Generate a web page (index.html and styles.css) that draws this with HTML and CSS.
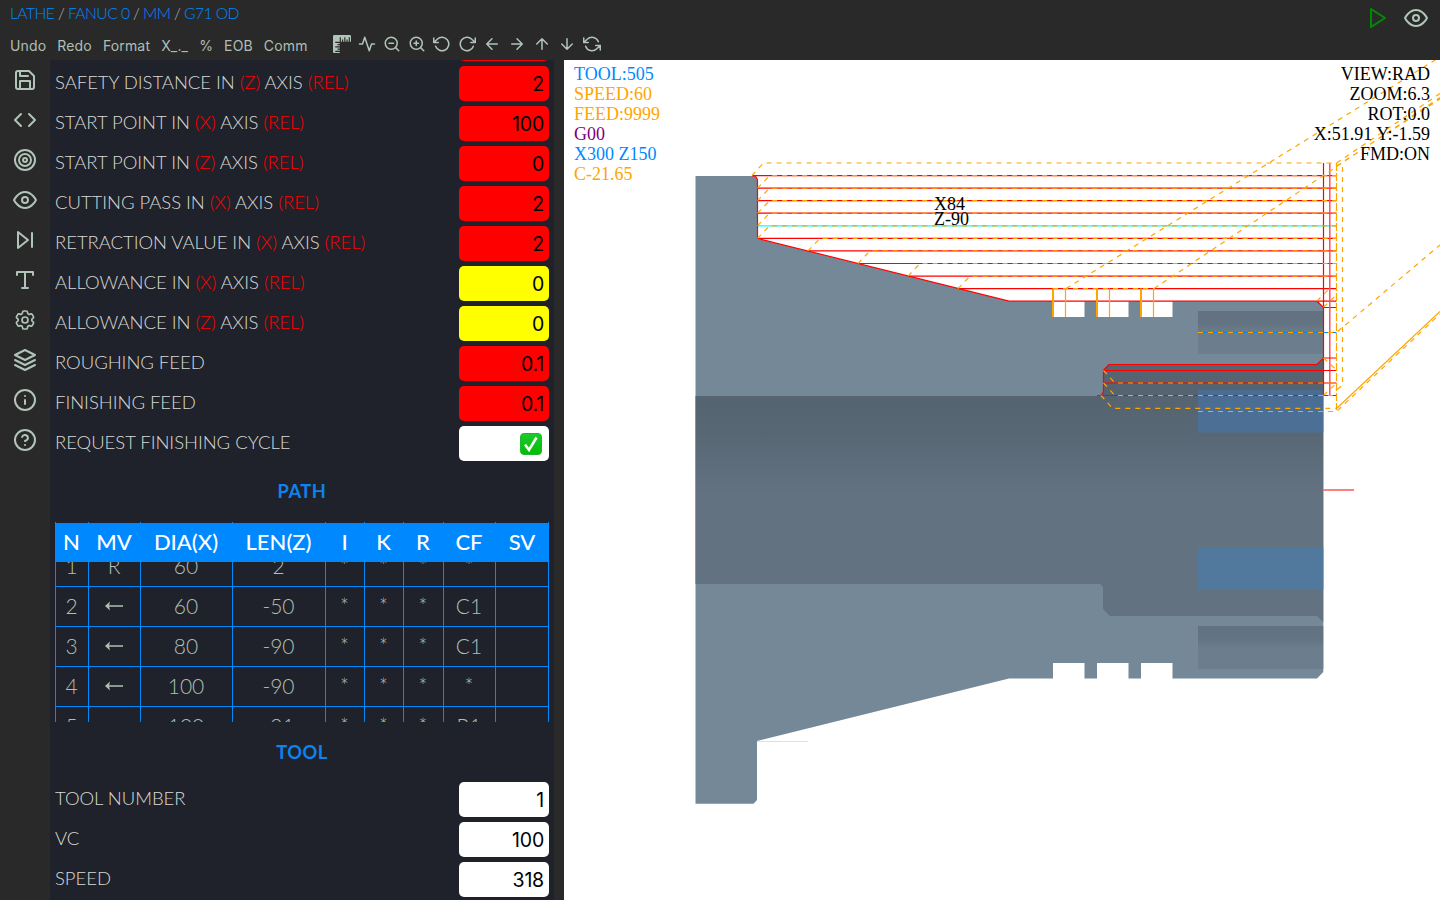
FILE: index.html
```html
<!DOCTYPE html>
<html lang="en">
<head>
<meta charset="utf-8">
<title>Lathe G71 OD</title>
<link rel="stylesheet" href="styles.css">
</head>
<body>
<div class="app">
  <header class="header">
    <div class="header-left">
      <nav class="crumbs"><a>LATHE</a> / <a>FANUC 0</a> / <a>MM</a> / <a>G71 OD</a></nav>
      <div class="toolbar">
        <div class="commands"><span>Undo</span><span>Redo</span><span>Format</span><span>X_._</span><span>%</span><span>EOB</span><span>Comm</span></div>
        <div class="tools">
          <svg class="tool" viewBox="0 0 16 16"><path class="solid" d="M1 0a1 1 0 0 0-1 1v14a1 1 0 0 0 1 1h5v-1H2v-1h4v-1H4v-1h2v-1H2v-1h4V9H4V8h2V7H2V6h4V2h1v4h1V4h1v2h1V2h1v4h1V4h1v2h1V2h1v4h1V1a1 1 0 0 0-1-1z"/></svg>
          <svg class="tool" viewBox="0 0 24 24"><polyline points="22 12 18 12 15 21 9 3 6 12 2 12"/></svg>
          <svg class="tool" viewBox="0 0 24 24"><circle cx="11" cy="11" r="8"/><path d="M21 21l-4.350-4.350M8 11h6"/></svg>
          <svg class="tool" viewBox="0 0 24 24"><circle cx="11" cy="11" r="8"/><path d="M21 21l-4.350-4.350M11 8v6M8 11h6"/></svg>
          <svg class="tool" viewBox="0 0 24 24"><path d="M1 4v6h6M3.510 15a9 9 0 1 0 2.130-9.360L1 10"/></svg>
          <svg class="tool" viewBox="0 0 24 24"><path d="M23 4v6h-6M20.490 15a9 9 0 1 1-2.120-9.360L23 10"/></svg>
          <svg class="tool" viewBox="0 0 24 24"><path d="M19 12H5M12 19l-7-7 7-7"/></svg>
          <svg class="tool" viewBox="0 0 24 24"><path d="M5 12h14M12 5l7 7-7 7"/></svg>
          <svg class="tool" viewBox="0 0 24 24"><path d="M12 19V5M5 12l7-7 7 7"/></svg>
          <svg class="tool" viewBox="0 0 24 24"><path d="M12 5v14M19 12l-7 7-7-7"/></svg>
          <svg class="tool" viewBox="0 0 24 24"><path d="M1 4v6h6M23 20v-6h-6M20.490 9A9 9 0 0 0 5.640 5.640L1 10m22 4l-4.640 4.360A9 9 0 0 1 3.510 15"/></svg>
        </div>
      </div>
    </div>
    <div class="header-right">
      <svg class="icon play" viewBox="0 0 24 24"><path d="M5 3l14 9-14 9z"/></svg>
      <svg class="icon view" viewBox="0 0 24 24"><path d="M1 12s4-8 11-8 11 8 11 8-4 8-11 8S1 12 1 12z"/><circle cx="12" cy="12" r="3"/></svg>
    </div>
  </header>
  <main class="main">
    <aside class="rail">
      <svg class="icon" viewBox="0 0 24 24"><path d="M19 21H5a2 2 0 0 1-2-2V5a2 2 0 0 1 2-2h11l5 5v11a2 2 0 0 1-2 2z"/><path d="M17 21v-8H7v8M7 3v5h8"/></svg>
      <svg class="icon" viewBox="0 0 24 24"><path d="M16 18l6-6-6-6M8 6l-6 6 6 6"/></svg>
      <svg class="icon" viewBox="0 0 24 24"><circle cx="12" cy="12" r="10"/><circle cx="12" cy="12" r="6"/><circle cx="12" cy="12" r="2"/></svg>
      <svg class="icon" viewBox="0 0 24 24"><path d="M1 12s4-8 11-8 11 8 11 8-4 8-11 8S1 12 1 12z"/><circle cx="12" cy="12" r="3"/></svg>
      <svg class="icon" viewBox="0 0 24 24"><path d="M5 4l10 8-10 8zM19 5v14"/></svg>
      <svg class="icon" viewBox="0 0 24 24"><path d="M4 7V4h16v3M9 20h6M12 4v16"/></svg>
      <svg class="icon gear" viewBox="0 0 24 24"><path d="M9.594 3.940c.09-.542.56-.94 1.110-.94h2.593c.55 0 1.020.398 1.110.94l.213 1.281c.063.374.313.686.645.87.074.04.147.083.22.127.325.196.72.257 1.075.124l1.217-.456a1.125 1.125 0 0 1 1.370.49l1.296 2.247a1.125 1.125 0 0 1-.26 1.431l-1.003.827c-.293.241-.438.613-.43.992a7.723 7.723 0 0 1 0 .255c-.008.378.137.75.43.991l1.004.827c.424.35.534.955.26 1.430l-1.298 2.247a1.125 1.125 0 0 1-1.369.491l-1.217-.456c-.355-.133-.75-.072-1.076.124a6.470 6.470 0 0 1-.22.128c-.331.183-.581.495-.644.869l-.213 1.281c-.09.543-.56.94-1.110.94h-2.594c-.55 0-1.019-.398-1.110-.94l-.213-1.281c-.062-.374-.312-.686-.644-.87a6.520 6.520 0 0 1-.22-.127c-.325-.196-.72-.257-1.076-.124l-1.217.456a1.125 1.125 0 0 1-1.369-.49l-1.297-2.247a1.125 1.125 0 0 1 .26-1.431l1.004-.827c.292-.24.437-.613.43-.991a6.932 6.932 0 0 1 0-.255c.007-.38-.138-.751-.43-.992l-1.004-.827a1.125 1.125 0 0 1-.26-1.430l1.297-2.247a1.125 1.125 0 0 1 1.370-.491l1.216.456c.356.133.751.072 1.076-.124.072-.044.146-.086.22-.128.332-.183.582-.495.644-.869l.214-1.280z"/><circle cx="12" cy="12" r="3"/></svg>
      <svg class="icon" viewBox="0 0 24 24"><path d="M12 2L2 7l10 5 10-5zM2 17l10 5 10-5M2 12l10 5 10-5"/></svg>
      <svg class="icon" viewBox="0 0 24 24"><circle cx="12" cy="12" r="10"/><path d="M12 16v-4M12 8h.01"/></svg>
      <svg class="icon" viewBox="0 0 24 24"><circle cx="12" cy="12" r="10"/><path d="M9.090 9a3 3 0 0 1 5.830 1c0 2-3 3-3 3M12 17h.01"/></svg>
    </aside>
    <section class="panel">
      <div class="fields scrolled">
        <div class="field"><label></label><output class="red"></output></div>
        <div class="field"><label>SAFETY DISTANCE IN <i>(Z)</i> AXIS <i>(REL)</i></label><output class="red">2</output></div>
        <div class="field"><label>START POINT IN <i>(X)</i> AXIS <i>(REL)</i></label><output class="red">100</output></div>
        <div class="field"><label>START POINT IN <i>(Z)</i> AXIS <i>(REL)</i></label><output class="red">0</output></div>
        <div class="field"><label>CUTTING PASS IN <i>(X)</i> AXIS <i>(REL)</i></label><output class="red">2</output></div>
        <div class="field"><label>RETRACTION VALUE IN <i>(X)</i> AXIS <i>(REL)</i></label><output class="red">2</output></div>
        <div class="field"><label>ALLOWANCE IN <i>(X)</i> AXIS <i>(REL)</i></label><output class="yellow">0</output></div>
        <div class="field"><label>ALLOWANCE IN <i>(Z)</i> AXIS <i>(REL)</i></label><output class="yellow">0</output></div>
        <div class="field"><label>ROUGHING FEED</label><output class="red">0.1</output></div>
        <div class="field"><label>FINISHING FEED</label><output class="red">0.1</output></div>
        <div class="field"><label>REQUEST FINISHING CYCLE</label><output><svg class="check" viewBox="0 0 22 22"><defs><linearGradient id="tick" x2="0" y2="1"><stop stop-color="#1ccb2d"/><stop offset="1" stop-color="#00bd00"/></linearGradient></defs><rect x=".5" y=".5" width="21" height="21" rx="3.500" fill="url(#tick)" stroke="#21b52f"/><path d="M5 11.500l4 5.500 7.500-12.500" fill="none" stroke="#fff" stroke-width="2.600"/></svg></output></div>
      </div>
      <h2 class="title">PATH</h2>
      <div class="table">
        <div class="row head"><b>N</b><b>MV</b><b>DIA(X)</b><b>LEN(Z)</b><b>I</b><b>K</b><b>R</b><b>CF</b><b>SV</b></div>
        <div class="body"><div class="rows">
          <div class="row"><span>1</span><span>R</span><span>60</span><span>2</span><span>*</span><span>*</span><span>*</span><span>*</span><span></span></div>
          <div class="row"><span>2</span><span><svg class="arrow" viewBox="0 0 18 10"><path d="M0 5l5-4.500L4 5l1 4.500z M4 4.200h14v1.600H4z"/></svg></span><span>60</span><span>-50</span><span>*</span><span>*</span><span>*</span><span>C1</span><span></span></div>
          <div class="row"><span>3</span><span><svg class="arrow" viewBox="0 0 18 10"><path d="M0 5l5-4.500L4 5l1 4.500z M4 4.200h14v1.600H4z"/></svg></span><span>80</span><span>-90</span><span>*</span><span>*</span><span>*</span><span>C1</span><span></span></div>
          <div class="row"><span>4</span><span><svg class="arrow" viewBox="0 0 18 10"><path d="M0 5l5-4.500L4 5l1 4.500z M4 4.200h14v1.600H4z"/></svg></span><span>100</span><span>-90</span><span>*</span><span>*</span><span>*</span><span>*</span><span></span></div>
          <div class="row"><span>5</span><span><svg class="arrow" viewBox="0 0 18 10"><path d="M0 5l5-4.500L4 5l1 4.500z M4 4.200h14v1.600H4z"/></svg></span><span>100</span><span>-91</span><span>*</span><span>*</span><span>*</span><span>R1</span><span></span></div>
        </div></div>
      </div>
      <h2 class="title tool-title">TOOL</h2>
      <div class="fields">
        <div class="field"><label>TOOL NUMBER</label><output>1</output></div>
        <div class="field"><label>VC</label><output>100</output></div>
        <div class="field"><label>SPEED</label><output>318</output></div>
      </div>
    </section>
    <svg class="stage" viewBox="564 60 876 840" width="876" height="840">
      <defs>
        <linearGradient id="bore" gradientUnits="userSpaceOnUse" x1="0" y1="396" x2="0" y2="584"><stop stop-color="#566471"/><stop offset=".2" stop-color="#586774"/><stop offset=".52" stop-color="#627281"/><stop offset="1" stop-color="#627281"/></linearGradient>
        <linearGradient id="slot" x2="0" y2="1"><stop stop-color="#627281"/><stop offset=".3" stop-color="#637382"/><stop offset=".52" stop-color="#6c7e8e"/><stop offset="1" stop-color="#6c7e8e"/></linearGradient>
        <linearGradient id="blue" x2="0" y2="1"><stop stop-color="#496d92"/><stop offset="1" stop-color="#4c7097"/></linearGradient>
      </defs>
      <g class="part">
        <path fill="#758898" d="M695.500 176H752q5 0 5 5V238.500L1009 301.200H1053V317H1084.500V301.200H1097V317H1128.500V301.200H1141V317H1172.500V301.200H1317L1323.300 307.500V672L1317 678.500H1172.500V663H1141V678.500H1128.500V663H1097V678.500H1084.500V663H1053V678.500H1009L757 741V800L753.500 803.700H695.500z"/>
        <path fill="url(#bore)" d="M695.500 396H1101L1103.500 390V370L1109 364.500H1317L1323.300 358V622L1317 616H1110L1103 609V587L1100.500 584H695.500z"/>
        <rect x="1198" y="311" width="125.300" height="43" fill="url(#slot)"/>
        <rect x="1198" y="626" width="125.300" height="43" fill="url(#slot)"/>
        <rect x="1198" y="390" width="125.300" height="42.500" fill="url(#blue)"/>
        <rect x="1198" y="547.500" width="125.300" height="42" fill="#51789d"/>
        <path class="faint" d="M757 741.500H808"/>
      </g>
      <g class="cut">
        <path d="M752 175.700H1336.500M757.500 188.200H1336.500M757.500 200.700H1336.500M757.500 213.200H1336.500M757.500 238.400H1336.500M808 250.900H1336.500M858 263.500H1336.500M908 276.100H1336.500M958 288.600H1336.500"/>
        <path class="cyan" d="M757.500 225.800H1336.500"/>
        <path d="M752 175.700q5.500 0 5.500 6V238.400L1009 301.200H1317L1323.500 307.500H1336.500M1317 301.200h19.500"/>
        <path d="M1323.500 163V395.500M1323.500 490H1354"/>
        <path class="soft" d="M1329.800 163V395.500"/>
        <path d="M1336.500 358H1323.500L1317 364.500H1109L1103.500 370.300V392L1101 395.500M1103.500 370.500H1336.500M1103.500 383H1336.500M1097 395.500H1336.500"/>
        <path class="rapid-base" d="M1198 332.500H1336.500"/>
      </g>
      <g class="rapid">
        <path d="M752 175.500L763.500 163H1336.500"/>
        <path d="M757.500 188.200L769.500 175.700H1336.500M757.500 200.700L769.500 188.200H1336.500M757.500 213.200L769.500 200.700H1336.500M757.500 225.800L769.500 213.200H1336.500M757.500 238.400L769.500 225.800H1336.500"/>
        <path d="M808 250.900L820 238.400H1336.500M858 263.500L870 250.900H1336.500M908 276.100L920 263.500H1336.500M958 288.600L970 276.100H1336.500M1053 288.600H1155"/>
        <path d="M1066 288.600L1440 57M1154 288.600L1440 97.500M1336.500 163L1440 93.500M1336.500 166L1440 99"/>
        <path d="M1336.500 163V410M1336.500 166V410M1342.500 167V385L1336.500 390"/>
        <path d="M1317 301L1329 289M1323.500 307L1336.500 295M1323.500 358L1336.500 370M1323.500 395.500L1336.500 383"/>
        <path d="M1198 332.500H1336.500L1440 245"/>
        <path d="M1103.500 370.500L1115 383H1336.500M1103.500 383L1115 395.500H1336.500M1101 395.500L1112.500 408.300H1336.500M1198 411.500H1336.500L1440 314"/>
        <path class="continuous" d="M1336.500 408.500L1440 311.500"/>
        <path class="continuous wide" d="M1053 288.500V317M1097 288.500V317M1141 288.500V317"/>
        <path class="continuous" d="M1065.500 288.500V317M1109.500 288.500V317M1153.500 288.500V317"/>
      </g>
      <g class="readout">
        <text x="574" y="80" fill="#08f">TOOL:505</text>
        <text x="574" y="100" fill="orange">SPEED:60</text>
        <text x="574" y="120" fill="orange">FEED:9999</text>
        <text x="574" y="140" fill="purple">G00</text>
        <text x="574" y="160" fill="#08f">X300 Z150</text>
        <text x="574" y="180" fill="orange">C-21.65</text>
        <text x="934" y="210">X84</text>
        <text x="934" y="225">Z-90</text>
        <g text-anchor="end">
          <text x="1430" y="80">VIEW:RAD</text>
          <text x="1430" y="100">ZOOM:6.3</text>
          <text x="1430" y="120">ROT:0.0</text>
          <text x="1430" y="140">X:51.91 Y:-1.59</text>
          <text x="1430" y="160">FMD:ON</text>
        </g>
      </g>
    </svg>
  </main>
</div>
</body>
</html>
```
FILE: styles.css
```css
* { box-sizing: border-box; }
body { margin: 0; background: #292929; font-family: Lato, sans-serif; }
.app { width: 1440px; height: 900px; display: flex; flex-direction: column; overflow: hidden; }

.header { height: 60px; display: flex; justify-content: space-between; background: #292929; color: #b0bfb4; }
.header-left { padding: 3px 0 0 10px; }
.crumbs { height: 20px; line-height: 20px; font-size: 15.700px; font-weight: 300; letter-spacing: -.57px; white-space: pre; }
.crumbs a { color: #08f; }
.toolbar { display: flex; height: 36px; }
.commands { display: flex; gap: 11px; width: 323px; padding-top: 13px; font: 14px/20px Inter, sans-serif; letter-spacing: .16px; }
.tools { display: flex; gap: 7px; padding-top: 12px; }
.tool, .icon { fill: none; stroke: #b0c4b8; stroke-width: 2; stroke-linecap: round; stroke-linejoin: round; }
.tool { width: 18px; height: 18px; }
.tool .solid { fill: #b0c4b8; stroke: none; }
.icon { width: 24px; height: 24px; flex: none; }
.header-right { display: flex; gap: 14px; padding: 6px 12px 0 0; }
.play { stroke: #008c00; }

.main { height: 840px; display: flex; }
.rail { width: 50px; display: flex; flex-direction: column; align-items: center; gap: 16px; padding-top: 8px; }
.gear { stroke-width: 1.7; }
.panel { width: 504px; height: 840px; margin-right: 10px; padding: 0 5px; overflow: hidden; background: #1f222a; }
.stage { flex: none; background: #fff; }

.fields { display: flex; flex-direction: column; gap: 5px; }
.scrolled { margin-top: -34px; }
.field { display: flex; justify-content: space-between; height: 35px; }
.field label { padding-top: 4px; line-height: 24px; font-size: 18.500px; font-weight: 300; letter-spacing: -.04px; color: #d8d9d5; white-space: nowrap; }
.field label i { font-style: normal; color: #f00; }
.field output { width: 90px; height: 35px; padding: 1px 5px 0 0; border-radius: 5px; background: #fff; color: #000; text-align: right; font: 19.500px/35px Inter, sans-serif; letter-spacing: -.2px; }
.field .red { background: #f00; }
.field .yellow { background: #ff0; }
.check { width: 22px; height: 22px; display: block; margin: 6px 2px 0 auto; }

.title { margin: 0; height: 61px; line-height: 60px; text-align: center; font-size: 18.300px; font-weight: 700; letter-spacing: .5px; color: #0d83ee; }
.tool-title { height: 60px; }
.table { height: 200px; overflow: hidden; color: #b0bfb4; }
.row { display: grid; grid-template-columns: 33px 52px 92px 93px 39px 39px 40px 52px 54px; height: 40px; border-right: 1px solid #08f; }
.row span, .row b { display: flex; align-items: center; justify-content: center; border-left: 1px solid #08f; }
.row span { border-bottom: 1px solid #08f; padding: 0 1px 2px 0; font-size: 21px; font-weight: 300; }
.head b { background: linear-gradient(#08f, #08f) 0 1px no-repeat; padding: 0 1px 2px 0; color: #fff; font-size: 22px; font-weight: 500; }
.body { height: 160px; overflow: hidden; }
.rows { margin-top: -15px; }
.arrow { width: 18px; height: 10px; fill: #b0bfb4; }

.cut path { fill: none; stroke: #f00; stroke-width: 1.200; }
.cut .cyan { stroke: #0ff; }
.cut .soft { stroke: #ff4d60; stroke-width: 1.500; }
.cut .rapid-base { stroke: #08f; }
.rapid path { fill: none; stroke: orange; stroke-width: 1.200; stroke-dasharray: 5 5; }
.rapid .continuous { stroke-dasharray: none; }
.rapid .wide { stroke-width: 2; }
.faint { stroke: #dce0e4; stroke-width: 1; }
.readout { font: 18px "Liberation Serif", serif; }
```
